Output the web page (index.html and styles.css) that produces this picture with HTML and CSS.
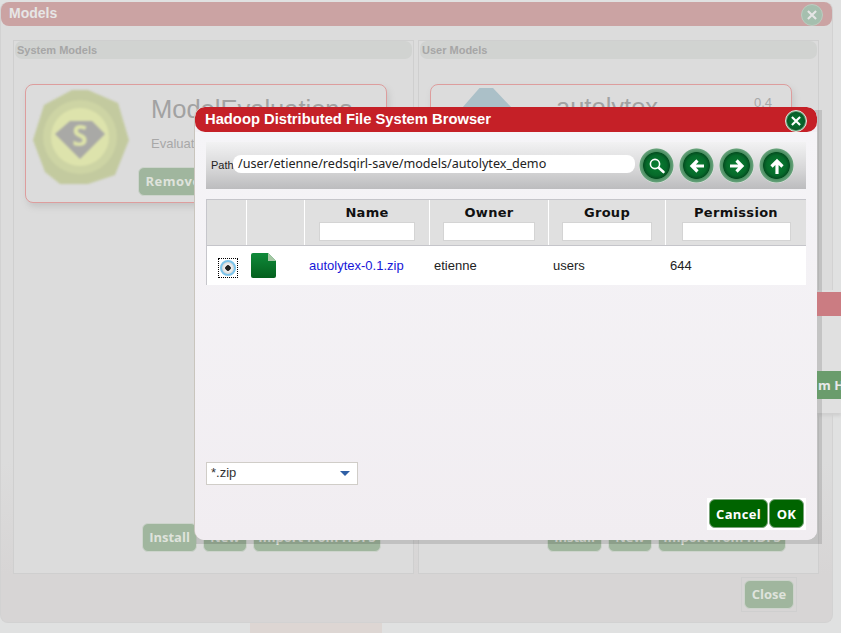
FILE: index.html
```html
<!DOCTYPE html>
<html lang="en">
<head>
<meta charset="utf-8">
<title>Hadoop Distributed File System Browser</title>
<link rel="stylesheet" href="styles.css">
</head>
<body>
<div class="desktop">
  <div class="stripe"></div>

  <section class="models">
    <header class="models-title">
      <span>Models</span>
      <span class="x-btn faded"><svg viewBox="0 0 12 12"><path d="M2.5 2.5l7 7M9.5 2.5l-7 7"/></svg></span>
    </header>
    <div class="columns">
      <div class="panel">
        <div class="panel-title">System Models</div>
        <article class="card">
          <svg class="seal" viewBox="0 0 97 95">
            <polygon points="39,0 55,0 85,13 96,50 82,85 55,94 27,94 12,82 0,50 11,15" fill="#c3ca9f"/>
            <circle cx="47" cy="47" r="37" fill="#cdd4a4"/>
            <circle cx="47" cy="47" r="29" fill="#dde3ac"/>
            <polygon points="37,31 59,31 72,44 47,69 22,44" fill="#a9a9a6"/>
            <text x="47" y="56" text-anchor="middle" class="seal-s">S</text>
          </svg>
          <div class="card-body">
            <div class="card-name">ModelEvaluations</div>
            <div class="card-desc">Evaluate</div>
            <span class="btn faded-btn remove">Remove</span>
          </div>
        </article>
        <div class="panel-actions">
          <span class="btn faded-btn b-install">Install</span>
          <span class="btn faded-btn b-new">New</span>
          <span class="btn faded-btn b-import">Import from HDFS</span>
        </div>
      </div>
      <div class="panel user">
        <div class="panel-title">User Models</div>
        <article class="card">
          <svg class="hex" viewBox="0 0 100 40"><polygon points="0,40 35,0 62,0 100,40" fill="#abc0c8"/></svg>
          <div class="card-body">
            <div class="card-name">autolytex</div>
          </div>
          <span class="version">0.4</span>
        </article>
        <div class="panel-actions">
          <span class="btn faded-btn b-install">Install</span>
          <span class="btn faded-btn b-new">New</span>
          <span class="btn faded-btn b-import">Import from HDFS</span>
        </div>
      </div>
    </div>
    <footer class="models-foot">
      <span class="close-wrap"><span class="btn faded-btn b-close">Close</span></span>
    </footer>
  </section>

  <div class="back-panel"></div>
  <div class="dialog-shadow"></div>
  <div class="back-title"></div>
  <div class="back-btn">m H</div>

  <section class="dialog">
    <header class="dialog-title">
      <span>Hadoop Distributed File System Browser</span>
      <span class="x-btn"><svg viewBox="0 0 12 12"><path d="M2.5 2.5l7 7M9.5 2.5l-7 7"/></svg></span>
    </header>
    <div class="dialog-body">
      <div class="toolbar">
        <label class="path-label">Path</label>
        <div class="path-input">/user/etienne/redsqirl-save/models/autolytex_demo</div>
        <div class="tools">
          <span class="round"><svg viewBox="0 0 24 24"><circle cx="10" cy="10" r="4.6" class="thin"/><path d="M14 14l4.5 4" class="thick"/></svg></span>
          <span class="round"><svg viewBox="0 0 24 24"><path d="M19 12H7M12.5 6.5L7 12l5.5 5.5" class="arrow"/></svg></span>
          <span class="round"><svg viewBox="0 0 24 24"><path d="M5 12h12M11.5 6.5L17 12l-5.5 5.5" class="arrow"/></svg></span>
          <span class="round"><svg viewBox="0 0 24 24"><path d="M12 20V7M6.5 12.5L12 7l5.5 5.5" class="arrow"/></svg></span>
        </div>
      </div>
      <div class="table">
        <div class="row head">
          <div class="cell c1"></div>
          <div class="cell c2"></div>
          <div class="cell c3"><b>Name</b><span class="filter"></span></div>
          <div class="cell c4"><b>Owner</b><span class="filter"></span></div>
          <div class="cell c5"><b>Group</b><span class="filter"></span></div>
          <div class="cell c6"><b>Permission</b><span class="filter"></span></div>
        </div>
        <div class="row data">
          <div class="cell c1"><span class="radio-focus"><span class="radio"></span></span></div>
          <div class="cell c2">
            <svg class="file" viewBox="0 0 25 25">
              <defs><linearGradient id="g" x1="0" y1="0" x2="0" y2="1"><stop offset="0" stop-color="#0f8a3a"/><stop offset="1" stop-color="#04601d"/></linearGradient></defs>
              <path d="M2 0H17L25 8V23a2 2 0 0 1-2 2H2a2 2 0 0 1-2-2V2a2 2 0 0 1 2-2z" fill="url(#g)"/>
              <path d="M17 0l8 8h-8z" fill="#a6c7a4"/>
            </svg>
          </div>
          <div class="cell c3"><a href="#">autolytex-0.1.zip</a></div>
          <div class="cell c4">etienne</div>
          <div class="cell c5">users</div>
          <div class="cell c6">644</div>
        </div>
      </div>
      <div class="filter-select"><span>*.zip</span><i class="caret"></i></div>
      <div class="dialog-actions">
        <span class="btn solid b-cancel">Cancel</span>
        <span class="btn solid b-ok">OK</span>
      </div>
    </div>
  </section>
</div>
</body>
</html>
```

FILE: styles.css
```css
* { box-sizing: border-box; }
html, body { margin: 0; height: 100%; }
body { background: #e0e1e1; font-family: "Liberation Sans", Arial, sans-serif; overflow: hidden; }
.desktop { position: relative; width: 841px; height: 633px; overflow: hidden; }

.stripe { position: absolute; left: 250px; top: 623px; width: 132px; height: 10px; background: #ddd6d3; }

/* Window behind the dialog: only its right edge shows */
.back-panel { position: absolute; left: 817px; top: 290px; width: 24px; height: 123px; background: #e0e0e0; box-shadow: 0 3px 3px #cfcfcf; }
.back-title { position: absolute; left: 817px; top: 292px; width: 24px; height: 24px; background: #cb7c82; }
.back-btn { position: absolute; left: 817px; top: 371px; width: 24px; height: 28px; background: #6a9c6c; color: #e8e8e8; font: bold 13px/28px "Open Sans", sans-serif; white-space: nowrap; overflow: hidden; padding-left: 1px; }

/* Models window */
.models { position: absolute; left: 0; top: 2px; width: 833px; height: 621px; background: linear-gradient(#dcdcdc 0, #dcdcdc 460px, #d7d5d5 572px); border-radius: 8px; border: 1px solid #d2d2d2; border-top: 0; display: flex; flex-direction: column; }
.models-title { height: 24px; background: #cba3a3; border-radius: 8px; color: #e6e6e6; font-weight: bold; font-size: 14px; line-height: 22px; padding: 0 9px 0 8px; display: flex; justify-content: space-between; flex: none; }
.columns { display: flex; gap: 4px; padding: 14px 0 0 12px; flex: none; height: 548px; }
.panel { position: relative; flex: 0 0 401px; border: 1px solid #cfcfcf; height: 534px; background: #dcdcdc; padding: 0 1px 1px; }
.panel-title { height: 18px; background: #d1d3d1; border-radius: 7px; color: #a6a6a6; font-size: 11px; font-weight: bold; line-height: 18px; padding-left: 2px; }
.card { position: relative; margin: 25px 0 0 10px; width: 362px; height: 119px; border: 1px solid #dd9d9d; border-radius: 8px; background: #dcdcdc; box-shadow: 2px 4px 6px #c6c6c6; display: flex; }
.seal { width: 97px; height: 95px; margin: 5px 0 0 7px; filter: blur(1.2px); flex: none; }
.seal-s { font: bold 28px "Open Sans", sans-serif; fill: #dde3a9; }
.card-body { margin-left: 21px; padding-top: 9px; }
.card-name { color: #a2a2a2; font-size: 25.5px; line-height: 30px; white-space: nowrap; }
.card-desc { color: #a8a8a8; font-size: 13px; margin-top: 12px; line-height: 16px; }
.hex { position: absolute; left: 16px; top: 3px; width: 80px; height: 20px; }
.user .card-body { margin-left: 125px; padding-top: 7px; }
.version { position: absolute; right: 19px; top: 10px; color: #a8a8a8; font-size: 13px; }

.btn { display: inline-flex; align-items: center; justify-content: center; height: 29px; border-radius: 6px; font: bold 13px "Open Sans", "Liberation Sans", sans-serif; white-space: nowrap; overflow: hidden; }
.faded-btn { background: #a0b69e; border: 1px solid #cdd4cc; color: #dfe3dc; padding-bottom: 2px; }
.remove { margin-top: 15px; margin-left: -13px; width: 70px; letter-spacing: .5px; }
.panel-actions { position: absolute; left: 128px; top: 482px; display: flex; gap: 6px; }
.b-install { width: 55px; }
.b-new { width: 44px; }
.b-import { width: 128px; }
.b-close { width: 50px; }
.models-foot { display: flex; justify-content: flex-end; padding-right: 35px; margin-top: 3px; }
.close-wrap { border: 1px solid #cfcfcf; padding: 2px; display: inline-flex; }

/* Close buttons */
.x-btn { width: 22px; height: 22px; border-radius: 50%; background: radial-gradient(circle closest-side, #0a7a30 0, #06632a 7px, #0a5a28 8.5px, #4a8f60 9.2px, #5f9a70 10px); border: 1px solid #dfe8df; display: inline-flex; align-items: center; justify-content: center; }
.x-btn svg { width: 14px; height: 14px; }
.x-btn path { stroke: #fff; stroke-width: 1.8; fill: none; }
.x-btn.faded { margin-top: 2px; margin-right: 0; background: #a5bfae; border-color: #bcccc0; }
.x-btn.faded path { stroke: #e5e5e5; }

/* HDFS dialog */
.dialog-shadow { position: absolute; left: 196px; top: 110px; width: 626px; height: 434px; background: rgba(0, 0, 0, .12); }
.dialog { position: absolute; left: 194px; top: 107px; width: 623px; height: 433px; background: #f2eff3; border-radius: 10px; display: flex; flex-direction: column; overflow: hidden; border-left: 1px solid #c9c5bd; }
.dialog-title { height: 25px; flex: none; background: #c52027; border-radius: 10px; color: #fff; font-weight: bold; font-size: 14.75px; line-height: 24px; padding: 0 9px 0 10px; display: flex; justify-content: space-between; }
.dialog-title .x-btn { margin-top: 3px; margin-right: 1px; }
.dialog-body { flex: 1; padding: 10px 11px 0 11px; display: flex; flex-direction: column; background: linear-gradient(#f5f4f7, #f1edf1); }
.toolbar { height: 47px; width: 600px; flex: none; display: flex; align-items: center; background: linear-gradient(#f2f2f3 0, #d5d5d6 60%, #bcbcbe 100%); padding: 0 0 0 5px; }
.path-label { font-size: 11px; color: #222; width: 22px; flex: none; margin-bottom: 1px; }
.path-input { width: 402px; height: 18px; flex: none; background: #fff; border-radius: 8px; font: 12.6px/18px "Noto Sans", "Open Sans", sans-serif; color: #222; padding-left: 5px; white-space: nowrap; overflow: hidden; margin-bottom: 3px; }
.tools { display: flex; gap: 5px; margin-left: 4px; }
.round { width: 35px; height: 35px; border-radius: 50%; background: radial-gradient(circle closest-side, #0a7f32 0, #066a2a 10px, #044f20 13px, #4a8f60 13.8px, #66a07a 16.5px, #dfe8df 17.5px); display: inline-flex; align-items: center; justify-content: center; }
.round svg { width: 24px; height: 24px; }
.arrow { stroke: #fff; stroke-width: 3.2; fill: none; }
.thin { stroke: #fff; stroke-width: 1.6; fill: none; }
.thick { stroke: #fff; stroke-width: 2.6; fill: none; stroke-linecap: round; }

.table { margin-top: 10px; width: 600px; flex: none; background: #fff; border-left: 1px solid #c6c6cb; }
.row { display: flex; }
.head { height: 47px; background: #e0e0e0; border-top: 1px solid #c5c5ca; border-bottom: 1px solid #c5c5ca; }
.cell { flex: none; border-left: 1px solid #fff; }
.head .cell { display: flex; flex-direction: column; align-items: center; padding-top: 5px; }
.head .cell:first-child { border-left: 0; }
.head b { font: bold 13px/16px "DejaVu Sans", Verdana, sans-serif; color: #111; letter-spacing: .3px; }
.filter { display: block; height: 19px; background: #fff; border: 1px solid #d4d4d4; margin-top: 1px; }
.c1 { width: 39px; }
.c2 { width: 58px; }
.c3 { width: 125px; }
.c4 { width: 119px; }
.c5 { width: 117px; }
.c6 { width: 141px; }
.c3 .filter { width: 96px; }
.c4 .filter { width: 92px; }
.c5 .filter { width: 90px; }
.c6 .filter { width: 109px; }
.data { height: 39px; background: #fff; font-size: 13px; color: #222; line-height: 39px; }
.data .cell { border-left: 0; }
.data .c3, .data .c4, .data .c5, .data .c6 { padding-left: 5px; }
.data a { color: #1616d8; text-decoration: none; }
.radio-focus { display: block; width: 20px; height: 20px; margin: 12px 0 0 11px; border: 1px dotted #000; padding: 1px; }
.radio { display: block; width: 16px; height: 16px; border-radius: 50%; border: 2px solid #7cc4ea; background: radial-gradient(circle closest-side, #222 0 2.5px, #f4f4f4 3px, #d8d8d8 100%); }
.file { display: block; width: 25px; height: 25px; margin: 7px 0 0 5px; }

.filter-select { margin-top: 177px; width: 152px; height: 23px; flex: none; background: #fff; border: 1px solid #d0cdc8; display: flex; align-items: center; justify-content: space-between; font-size: 13px; color: #333; padding: 0 7px 2px 4px; }
.caret { width: 0; height: 0; border: 5px solid transparent; border-top: 5px solid #2f5fa5; border-bottom: 0; margin-top: 2px; }
.dialog-actions { display: flex; gap: 1px; align-self: flex-start; margin-left: 501px; margin-top: 13px; padding: 1px 2px 2px; background: #fff; }
.solid { background: #006400; color: #fff; border: 1px solid #7aa37a; letter-spacing: .3px; }
.b-cancel { width: 59px; }
.b-ok { width: 35px; }
```
